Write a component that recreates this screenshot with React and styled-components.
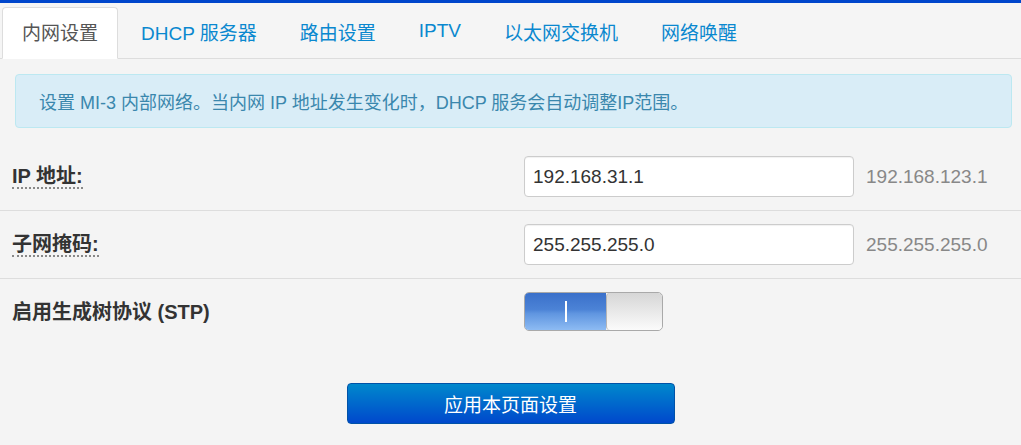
import React from 'react'
import styled, { createGlobalStyle } from 'styled-components'

const GlobalStyle = createGlobalStyle`
  html, body {
    margin: 0;
    padding: 0;
    background: #f4f4f4;
    font-family: "Liberation Sans", Arial, "Noto Sans CJK SC", sans-serif;
  }
`

const Page = styled.div`
  width: 1021px;
  height: 445px;
  overflow: hidden;
  border-top: 3px solid #0046cc;
  box-sizing: border-box;
`

const TabBar = styled.ul`
  display: flex;
  margin: 0;
  padding: 4px 0 0 2px;
  list-style: none;
  border-bottom: 1px solid #dddddd;
  background: #f5f5f5;
`

const Tab = styled.li`
  height: 52px;
  box-sizing: border-box;
  display: flex;
  align-items: center;
  padding: 0 19px 4px;
  margin-right: 3px;
  margin-bottom: -1px;
  font-size: 19px;
  color: ${(p) => (p.active ? '#555555' : '#0a88cf')};
  background: ${(p) => (p.active ? '#ffffff' : 'transparent')};
  border: 1px solid ${(p) => (p.active ? '#dddddd' : 'transparent')};
  border-bottom-color: ${(p) => (p.active ? '#ffffff' : 'transparent')};
  border-radius: 4px 4px 0 0;
`

const Alert = styled.div`
  margin: 15px 9px 0 15px;
  height: 54px;
  box-sizing: border-box;
  display: flex;
  align-items: center;
  padding: 0 23px;
  background: #d9edf7;
  border: 1px solid #bce8f1;
  border-radius: 4px;
  color: #3a87ad;
  font-size: 18px;
`

const Form = styled.div`
  margin-top: 15px;
`

const Row = styled.div`
  display: grid;
  grid-template-columns: 500px 330px auto;
  align-items: center;
  column-gap: 12px;
  padding: 13px 0 13px 12px;
  border-bottom: ${(p) => (p.last ? 'none' : '1px solid #dddddd')};
`

const Label = styled.span`
  justify-self: start;
  font-size: 20px;
  font-weight: bold;
  color: #333333;
  line-height: 22px;
  border-bottom: ${(p) => (p.dotted ? '2px dotted #888888' : 'none')};
`

const Input = styled.input`
  width: 330px;
  height: 41px;
  box-sizing: border-box;
  padding: 0 8px;
  border: 1px solid #cccccc;
  border-radius: 4px;
  background: #ffffff;
  font-family: inherit;
  font-size: 19px;
  color: #333333;
  box-shadow: inset 0 1px 1px rgba(0, 0, 0, 0.06);
  outline: none;
`

const Hint = styled.span`
  font-size: 19px;
  color: #888888;
`

const Switch = styled.div`
  display: flex;
  width: 139px;
  height: 39px;
  box-sizing: border-box;
  border: 1px solid #a9a9a9;
  border-radius: 5px;
  overflow: hidden;
`

const SwitchOn = styled.div`
  width: 81px;
  display: flex;
  align-items: center;
  justify-content: center;
  background: linear-gradient(#3a70ca 0%, #4c83d6 45%, #5f95e0 55%, #8dbbf3 100%);
`

const SwitchBar = styled.span`
  width: 2px;
  height: 21px;
  background: #ffffff;
`

const SwitchKnob = styled.div`
  flex: 1;
  border-left: 1px solid #b5b5b5;
  border-radius: 4px;
  background: linear-gradient(#d6d6d6, #fbfbfb);
`

const Actions = styled.div`
  display: flex;
  justify-content: center;
  padding-top: 39px;
`

const ApplyButton = styled.button`
  width: 328px;
  height: 41px;
  border: 1px solid #0052a8;
  border-radius: 4px;
  background: linear-gradient(#0088cc, #0048cc);
  color: #ffffff;
  font-family: inherit;
  font-size: 19px;
  cursor: pointer;
`

const tabs = ['内网设置', 'DHCP 服务器', '路由设置', 'IPTV', '以太网交换机', '网络唤醒']

export default function App() {
  return (
    <Page>
      <GlobalStyle />
      <TabBar>
        {tabs.map((t, i) => (
          <Tab key={t} active={i === 0}>{t}</Tab>
        ))}
      </TabBar>
      <Alert>设置 MI-3 内部网络。当内网 IP 地址发生变化时，DHCP 服务会自动调整IP范围。</Alert>
      <Form>
        <Row>
          <Label dotted>IP 地址:</Label>
          <Input defaultValue="192.168.31.1" />
          <Hint>192.168.123.1</Hint>
        </Row>
        <Row>
          <Label dotted>子网掩码:</Label>
          <Input defaultValue="255.255.255.0" />
          <Hint>255.255.255.0</Hint>
        </Row>
        <Row last>
          <Label>启用生成树协议 (STP)</Label>
          <Switch>
            <SwitchOn><SwitchBar /></SwitchOn>
            <SwitchKnob />
          </Switch>
        </Row>
      </Form>
      <Actions>
        <ApplyButton>应用本页面设置</ApplyButton>
      </Actions>
    </Page>
  )
}
